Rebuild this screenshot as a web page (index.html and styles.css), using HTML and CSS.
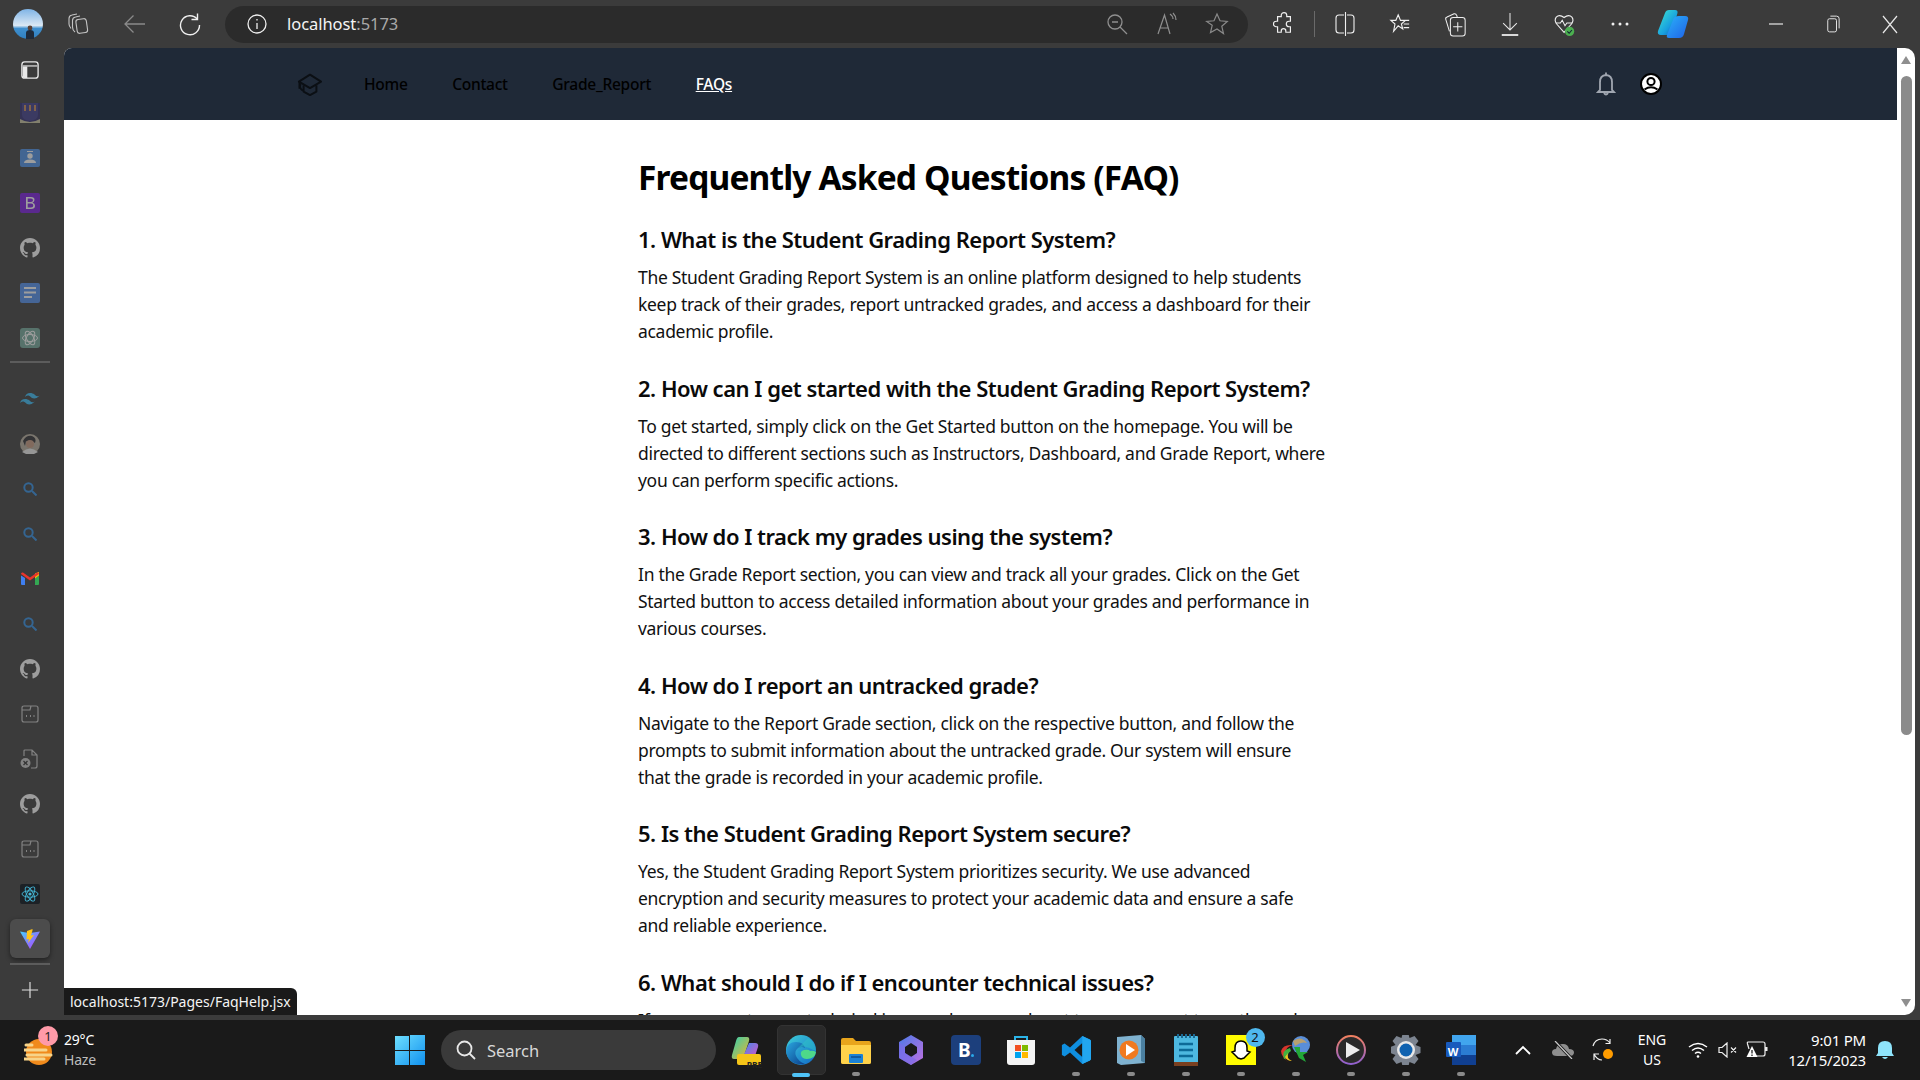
FILE: index.html
```html
<!DOCTYPE html>
<html lang="en">
<head>
<meta charset="utf-8">
<title>FAQ</title>
<link rel="stylesheet" href="styles.css">
</head>
<body>
<div class="screen">
  <header class="chrome">
    <div class="btn w-avatar"><svg width="30" height="30" viewBox="0 0 30 30"><defs><linearGradient id="sky" x1="0" y1="0" x2="0" y2="1"><stop offset="0" stop-color="#7fb4e6"/><stop offset=".55" stop-color="#dbe8f4"/><stop offset=".65" stop-color="#3f8fce"/><stop offset="1" stop-color="#2f7fc0"/></linearGradient></defs><circle cx="15" cy="15" r="15" fill="url(#sky)"/><circle cx="17" cy="19" r="2.4" fill="#5a4034"/><path d="M13 30v-6q0-3 4-3t4 3v6z" fill="#1f2a3a"/></svg></div>
    <div class="btn w-tabs"><svg width="24" height="24" viewBox="0 0 24 24" fill="none" stroke="#c4c4c4" stroke-width="1.100"><rect x="10.500" y="7" width="10.500" height="14" rx="2.500" transform="rotate(-8 15.700 14)"/><path d="M9 20Q6.500 18 6.500 15V8.500Q6.500 5.500 9.500 5L14 4"/><path d="M5 16.500Q3 14 3 12V6.500Q3 3.500 6 3L11 2"/></svg></div>
    <div class="btn w-back"><svg width="24" height="24" viewBox="0 0 24 24" fill="none" stroke="#8a8a8a" stroke-width="1.300"><path d="M22 12H2M10.500 3.500 2 12l8.500 8.500"/></svg></div>
    <div class="btn w-reload"><svg width="24" height="24" viewBox="0 0 24 24" fill="none" stroke="#f0f0f0" stroke-width="1.400"><path d="M19.500 1.500v6h-6"/><path d="M19.300 7.200A9.500 9.500 0 1 0 21.500 13"/></svg></div>
    <div class="address">
      <div class="btn w-addr-l"><svg width="22" height="22" viewBox="0 0 22 22" fill="none" stroke="#efefef" stroke-width="1.300"><circle cx="11" cy="11" r="9"/><path d="M11 10v6M11 6v1.500"/></svg></div>
      <span class="url">localhost<span class="url-port">:5173</span></span>
      <div class="addr-right">
        <div class="btn w-addr"><svg width="24" height="24" viewBox="0 0 24 24" fill="none" stroke="#8f8f8f" stroke-width="1.300"><circle cx="10" cy="10" r="7"/><path d="M15 15l7 7M7 10h6"/></svg></div>
        <div class="btn w-addr"><svg width="24" height="26" viewBox="0 0 24 26" fill="none" stroke="#8f8f8f" stroke-width="1.200"><path d="M3 23 9.500 4 15 23M5 17h8M15 3q3 2 3 5M18 2q3 3 3 7"/></svg></div>
        <div class="btn w-addr"><svg width="24" height="24" viewBox="0 0 24 24" fill="none" stroke="#8a8a8a" stroke-width="1.200"><path d="m12 2 3 6.800 7.300.7-5.500 4.800 1.700 7.200L12 17l-6.500 3.500 1.700-7.200L1.700 9.500 9 8.800z"/></svg></div>
      </div>
    </div>
    <div class="actions">
      <div class="btn w-act"><svg width="22" height="26" viewBox="0 0 24 28" fill="none" stroke="#f0f0f0" stroke-width="1.300"><path d="M9 4.500a3 3 0 0 1 6 0V6h4v5h-1.500a3 3 0 0 0 0 6H19v6h-5v-1.500a2.500 2.500 0 0 0-5 0V23H5v-6H3.500a3 3 0 0 1 0-6H5V6h4z"/></svg></div>
      <span class="sep"></span>
      <div class="btn w-act"><svg width="20" height="28" viewBox="0 0 20 28" fill="none" stroke="#f0f0f0" stroke-width="1.100"><path d="M9 5H4Q1 5 1 8v12q0 3 3 3h5M12 5h4q3 0 3 3v12q0 3-3 3h-4"/><path d="M10.500 2v24"/></svg></div>
      <div class="btn w-act"><svg width="22" height="26" viewBox="0 0 24 26" fill="none" stroke="#f0f0f0" stroke-width="1.200"><path d="M10 3l2.500 6H18l-4.500 4 1.500 5.500L10 15l-5 6 1.500-8L2 9h5.500zM16 9h6M16 13h6M16 17h6"/></svg></div>
      <div class="btn w-act"><svg width="24" height="30" viewBox="0 0 26 30" fill="none" stroke="#f0f0f0" stroke-width="1.100"><rect x="8" y="8" width="16" height="20" rx="3"/><path d="M16 13v10M11 18h10M7 23 3 10q-.6-2 1.400-2.600L12 4q2-.6 3 2l.5 2"/></svg></div>
      <div class="btn w-act"><svg width="22" height="28" viewBox="0 0 24 28" fill="none" stroke="#e8e8e8" stroke-width="1.100"><path d="M12 2v18M4.500 13 12 20.500 19.500 13"/><path d="M3 26h18" stroke-width="2"/></svg></div>
      <div class="btn w-act"><svg width="24" height="30" viewBox="0 0 26 30"><path d="M12 24 4 15Q1 11 3.500 7.500 7 4 12 8q5-4 8.500-.5 2.500 3.500-.5 7.500z" fill="none" stroke="#f0f0f0" stroke-width="1.200"/><path d="M3 14h5l2-3 3 6 2-3h6" fill="none" stroke="#f0f0f0" stroke-width="1.100"/><circle cx="18" cy="23" r="5" fill="#4caf50"/><path d="m15.500 23 2 2 3-3.500" fill="none" stroke="#123" stroke-width="1.100"/></svg></div>
      <div class="btn w-act"><svg width="20" height="6" viewBox="0 0 20 6" fill="#f0f0f0"><circle cx="3" cy="3" r="1.500"/><circle cx="10" cy="3" r="1.500"/><circle cx="17" cy="3" r="1.500"/></svg></div>
      <div class="btn w-act copilot"><svg width="32" height="28" viewBox="0 0 32 28"><defs><linearGradient id="cp1" x1="0" y1="0" x2="1" y2="1"><stop offset="0" stop-color="#3fe8d0"/><stop offset=".6" stop-color="#18a0e0"/><stop offset="1" stop-color="#1450b0"/></linearGradient><linearGradient id="cp2" x1="0" y1="0" x2="1" y2="1"><stop offset="0" stop-color="#2ab0f8"/><stop offset="1" stop-color="#1f62e8"/></linearGradient></defs><path d="M12 0h6q3 0 2.500 3L15 22q-1 3-4 3H4q-4 0-3-4L8 3q1-3 4-3z" fill="url(#cp1)"/><path d="M22 6h6q4 0 3 4l-4 14q-1 4-5 4H12q-3 0-2-3l6-15q1-4 6-4z" fill="url(#cp2)"/></svg></div>
    </div>
    <div class="winctl">
      <div class="btn w-win"><svg width="16" height="16" viewBox="0 0 16 16" stroke="#e8e8e8" stroke-width="1.200"><path d="M1 8h14"/></svg></div>
      <div class="btn w-win"><svg width="14" height="22" viewBox="0 0 16 22" fill="none" stroke="#e8e8e8" stroke-width="1.100"><rect x="2" y="5" width="10" height="15" rx="2"/><path d="M5 2h7q3 0 3 3v11"/></svg></div>
      <div class="btn w-win"><svg width="16" height="22" viewBox="0 0 16 22" stroke="#e8e8e8" stroke-width="1.200"><path d="m1 3 14 17M15 3 1 20"/></svg></div>
    </div>
  </header>

  <div class="middle">
    <aside class="sidebar">
      <div class="side-item first"><svg width="18" height="18" viewBox="0 0 20 20"><rect x="1" y="1" width="18" height="18" rx="3" fill="none" stroke="#e8e8e8" stroke-width="1.500"/><path d="M2 6h5v13H4q-2 0-2-2z" fill="#e8e8e8"/><path d="M2 5.500h16" stroke="#e8e8e8" stroke-width="1.300"/></svg></div>
      <div class="side-item dim"><svg width="20" height="20" viewBox="0 0 20 20"><rect width="20" height="20" fill="#2f2a6e"/><path d="M2 0h16v12q0 5-8 6-8-1-8-6z" fill="#3c3a8a"/><path d="M4 2h2v6H4zM9 2h2v6H9zM14 2h2v6h-2z" fill="#c88a55"/><path d="M0 16q10 6 20 0v4H0z" fill="#c9c5a0"/></svg></div>
      <div class="side-item dim"><svg width="20" height="18" viewBox="0 0 20 18"><rect width="20" height="18" rx="2" fill="#4a90e8"/><circle cx="10" cy="7" r="2.700" fill="#fff"/><path d="M4 14q0-3.500 6-3.500t6 3.500z" fill="#fff"/><path d="M7 2.500h6" stroke="#fff"/></svg></div>
      <div class="side-item dim"><svg width="20" height="20" viewBox="0 0 20 20"><rect width="20" height="20" rx="2" fill="#7a18e0"/><path d="M6 4h5q3.500 0 3.500 2.800 0 2-2 2.900 2.500.6 2.500 3 0 3.300-4 3.300H6zm1.700 1.500v3.600H11q2 0 2-1.800t-2-1.800zm0 5.100v3.900H11q2.300 0 2.300-2t-2.300-1.900z" fill="#fff"/></svg></div>
      <div class="side-item dim"><svg class="gh" width="20" height="20" viewBox="0 0 16 16"><path d="M8 0C3.580 0 0 3.580 0 8c0 3.540 2.290 6.530 5.470 7.590.4.070.55-.17.550-.38 0-.19-.01-.82-.01-1.490-2.010.37-2.530-.49-2.690-.94-.09-.23-.48-.94-.82-1.130-.28-.15-.68-.52-.01-.53.63-.01 1.080.58 1.230.82.720 1.210 1.870.87 2.330.66.070-.52.280-.87.510-1.070-1.780-.2-3.640-.89-3.640-3.950 0-.87.310-1.590.820-2.150-.08-.2-.36-1.020.08-2.120 0 0 .67-.21 2.200.82.640-.18 1.320-.27 2-.27s1.360.09 2 .27c1.530-1.040 2.200-.82 2.200-.82.440 1.100.16 1.920.08 2.120.51.560.82 1.270.82 2.150 0 3.070-1.870 3.750-3.650 3.950.29.250.54.730.54 1.480 0 1.070-.01 1.930-.01 2.200 0 .21.150.46.550.38A8.010 8.010 0 0 0 16 8c0-4.420-3.580-8-8-8z" fill="#fff"/></svg></div>
      <div class="side-item dim"><svg width="20" height="20" viewBox="0 0 20 20"><rect width="20" height="20" rx="2" fill="#4f8ff0"/><path d="M4 5h12M4 9.500h12M4 14h8" stroke="#fff" stroke-width="2"/></svg></div>
      <div class="side-item dim"><svg width="20" height="20" viewBox="0 0 20 20"><rect width="20" height="20" rx="3" fill="#74aa9c"/><g fill="none" stroke="#fff" stroke-width="1"><ellipse cx="10" cy="10" rx="7.500" ry="3.500"/><ellipse cx="10" cy="10" rx="7.500" ry="3.500" transform="rotate(60 10 10)"/><ellipse cx="10" cy="10" rx="7.500" ry="3.500" transform="rotate(120 10 10)"/></g></svg></div>
      <div class="side-rule top"></div>
      <div class="side-item dim"><svg width="20" height="12" viewBox="0 0 20 12"><path d="M10 0Q6 0 5 4q1.500-2 3.500-1.500C10 3 10.500 4 12 5q4 1.500 8-2.500-1.500 1-3.500.5C15 2.500 14 0 10 0zM5 6q-4 0-5 4 1.500-2 3.500-1.500C5 9 5.500 10 7 11q4 1.500 8-2.500-1.500 1-3.500.5C10 8.500 9 6 5 6z" fill="#38bdf8"/></svg></div>
      <div class="side-item dim"><svg width="20" height="20" viewBox="0 0 20 20"><circle cx="10" cy="10" r="10" fill="#b9b0a0"/><path d="M3 7q3-6 9-5 5 2 3 7l-3-2q-5 1-6 0l-1 5z" fill="#2c2c30"/><circle cx="10" cy="10" r="4" fill="#c79a80"/><path d="M2 18q8-7 16 0l-4 2H6z" fill="#f0f0f0"/></svg></div>
      <div class="side-item dim"><svg class="s" width="14" height="14" viewBox="0 0 14 14" fill="none" stroke="#2f8fe8" stroke-width="2"><circle cx="5.500" cy="5.500" r="4.200"/><path d="m9 9 4.500 4.500"/></svg></div>
      <div class="side-item dim"><svg class="s" width="14" height="14" viewBox="0 0 14 14" fill="none" stroke="#2f8fe8" stroke-width="2"><circle cx="5.500" cy="5.500" r="4.200"/><path d="m9 9 4.500 4.500"/></svg></div>
      <div class="side-item"><svg width="18" height="14" viewBox="0 0 18 14"><path d="M0 3.500V12q0 1 1 1h3V6z" fill="#3f7ff0"/><path d="M18 3.500V12q0 1-1 1h-3V6z" fill="#34a853"/><path d="M14 1.500 18 0v3.500L14 6.500z" fill="#fbbc04"/><path d="M0 2q0-2 2-1.500L9 5.500 16 .5Q18 0 18 2L9 8.500z" fill="#e8342c"/></svg></div>
      <div class="side-item dim"><svg class="s" width="14" height="14" viewBox="0 0 14 14" fill="none" stroke="#2f8fe8" stroke-width="2"><circle cx="5.500" cy="5.500" r="4.200"/><path d="m9 9 4.500 4.500"/></svg></div>
      <div class="side-item dim"><svg width="20" height="20" viewBox="0 0 16 16"><path d="M8 0C3.580 0 0 3.580 0 8c0 3.540 2.290 6.530 5.470 7.590.4.070.55-.17.550-.38 0-.19-.01-.82-.01-1.490-2.010.37-2.530-.49-2.690-.94-.09-.23-.48-.94-.82-1.130-.28-.15-.68-.52-.01-.53.63-.01 1.080.58 1.230.82.720 1.210 1.870.87 2.330.66.070-.52.280-.87.510-1.070-1.780-.2-3.640-.89-3.640-3.950 0-.87.310-1.590.820-2.150-.08-.2-.36-1.020.08-2.120 0 0 .67-.21 2.200.82.640-.18 1.320-.27 2-.27s1.360.09 2 .27c1.530-1.040 2.200-.82 2.200-.82.440 1.100.16 1.920.08 2.120.51.560.82 1.270.82 2.150 0 3.070-1.870 3.750-3.650 3.950.29.250.54.730.54 1.480 0 1.070-.01 1.930-.01 2.200 0 .21.150.46.550.38A8.010 8.010 0 0 0 16 8c0-4.420-3.580-8-8-8z" fill="#fff"/></svg></div>
      <div class="side-item dim"><svg width="18" height="18" viewBox="0 0 18 18" fill="none" stroke="#c8c8c8" stroke-width="1.200"><path d="M1 3q0-2 2-2h12q2 0 2 2v12q0 2-2 2H3q-2 0-2-2zM1 5h8l1-4"/><path d="M5 11h1M9 11h1M12.500 11h1" stroke-width="1.800"/></svg></div>
      <div class="side-item dim"><svg width="20" height="20" viewBox="0 0 20 20" fill="none" stroke="#c8c8c8" stroke-width="1.200"><path d="M4 7V2q0-1 1-1h7l5 5v11q0 2-2 2h-4M12 1v5h5"/><circle cx="5.500" cy="14" r="5" fill="#c8c8c8" stroke="none"/><path d="m3.500 12 4 4m0-4-4 4" stroke="#333" stroke-width="1.300"/></svg></div>
      <div class="side-item dim"><svg width="20" height="20" viewBox="0 0 16 16"><path d="M8 0C3.580 0 0 3.580 0 8c0 3.540 2.290 6.530 5.470 7.590.4.070.55-.17.550-.38 0-.19-.01-.82-.01-1.490-2.010.37-2.530-.49-2.690-.94-.09-.23-.48-.94-.82-1.130-.28-.15-.68-.52-.01-.53.63-.01 1.080.58 1.230.82.720 1.210 1.870.87 2.330.66.070-.52.280-.87.510-1.070-1.780-.2-3.640-.89-3.640-3.950 0-.87.310-1.590.820-2.150-.08-.2-.36-1.020.08-2.120 0 0 .67-.21 2.200.82.640-.18 1.320-.27 2-.27s1.360.09 2 .27c1.530-1.040 2.200-.82 2.200-.82.440 1.100.16 1.920.08 2.120.51.560.82 1.270.82 2.150 0 3.070-1.870 3.750-3.650 3.950.29.250.54.730.54 1.480 0 1.070-.01 1.930-.01 2.200 0 .21.150.46.550.38A8.010 8.010 0 0 0 16 8c0-4.420-3.580-8-8-8z" fill="#fff"/></svg></div>
      <div class="side-item dim"><svg width="18" height="18" viewBox="0 0 18 18" fill="none" stroke="#c8c8c8" stroke-width="1.200"><path d="M1 3q0-2 2-2h12q2 0 2 2v12q0 2-2 2H3q-2 0-2-2zM1 5h8l1-4"/><path d="M5 11h1M9 11h1M12.500 11h1" stroke-width="1.800"/></svg></div>
      <div class="side-item"><svg width="20" height="20" viewBox="0 0 20 20"><rect width="20" height="20" rx="2" fill="#1c2126"/><g fill="none" stroke="#45b8d8" stroke-width=".9"><ellipse cx="10" cy="10" rx="8" ry="3.200"/><ellipse cx="10" cy="10" rx="8" ry="3.200" transform="rotate(60 10 10)"/><ellipse cx="10" cy="10" rx="8" ry="3.200" transform="rotate(120 10 10)"/></g><circle cx="10" cy="10" r="1.600" fill="#45b8d8"/></svg></div>
      <div class="side-item"><div class="side-active"><svg width="20" height="20" viewBox="0 0 20 20"><defs><linearGradient id="vt" x1="0" y1="0" x2="1" y2="1"><stop offset="0" stop-color="#41d1ff"/><stop offset="1" stop-color="#bd34fe"/></linearGradient></defs><path d="M0 2.500 9 4l1 0 10-1.500L10 20z" fill="url(#vt)"/><path d="M12.500 0 7 2 6.500 10.500 9 10l-1 4 6-8-3 .5 1.500-5z" fill="#ffc517"/></svg></div></div>
      <div class="side-rule bottom"></div>
      <div class="side-item"><svg width="18" height="18" viewBox="0 0 20 20" stroke="#e0e0e0" stroke-width="1.300"><path d="M10 1v18M1 10h18"/></svg></div>
    </aside>

    <main class="page">
      <nav class="nav">
        <svg class="nav-logo" width="28" height="28" viewBox="0 0 24 24" fill="none" stroke="#0b0f14" stroke-width="1.700" stroke-linejoin="round"><path d="M12 4 2.500 10l9.500 5.500 9.500-5.500z"/><path d="M6.500 13v5.500l5.500 3 5.500-3V13"/><path d="M3 10v6"/><path d="M4 12q-1.500 3 1 5l1 .5"/></svg>
        <a class="nav-link">Home</a>
        <a class="nav-link">Contact</a>
        <a class="nav-link">Grade_Report</a>
        <a class="nav-link current">FAQs</a>
        <div class="nav-right">
          <svg width="24" height="26" viewBox="0 0 24 26" fill="none" stroke="#a0a6b0" stroke-width="1.800"><path d="M6 19v-8q0-6.500 6-7 6 .5 6 7v8l2 2H4z"/><path d="M10 22q2 3 4 0M12 1.500v2.500"/></svg>
          <svg width="22" height="22" viewBox="0 0 22 22"><circle cx="11" cy="11" r="10" fill="#fff" stroke="#000" stroke-width="2"/><circle cx="11" cy="8.500" r="3.600" fill="#fff" stroke="#000" stroke-width="2"/><path d="M4.500 16.500q6.500-4.500 13 0" fill="none" stroke="#000" stroke-width="2"/></svg>
        </div>
      </nav>
      <div class="content">
        <h1>Frequently Asked Questions (FAQ)</h1>
        <section class="faq">
          <h2>1. What is the Student Grading Report System?</h2>
          <p>The Student Grading Report System is an online platform designed to help students keep track of their grades, report untracked grades, and access a dashboard for their academic profile.</p>
        </section>
        <section class="faq">
          <h2>2. How can I get started with the Student Grading Report System?</h2>
          <p>To get started, simply click on the Get Started button on the homepage. You will be directed to different sections such as Instructors, Dashboard, and Grade Report, where you can perform specific actions.</p>
        </section>
        <section class="faq">
          <h2>3. How do I track my grades using the system?</h2>
          <p>In the Grade Report section, you can view and track all your grades. Click on the Get Started button to access detailed information about your grades and performance in various courses.</p>
        </section>
        <section class="faq">
          <h2>4. How do I report an untracked grade?</h2>
          <p>Navigate to the Report Grade section, click on the respective button, and follow the prompts to submit information about the untracked grade. Our system will ensure that the grade is recorded in your academic profile.</p>
        </section>
        <section class="faq">
          <h2>5. Is the Student Grading Report System secure?</h2>
          <p>Yes, the Student Grading Report System prioritizes security. We use advanced encryption and security measures to protect your academic data and ensure a safe and reliable experience.</p>
        </section>
        <section class="faq">
          <h2>6. What should I do if I encounter technical issues?</h2>
          <p>If you encounter any technical issues, please reach out to our support team through the help section of the platform.</p>
        </section>
      </div>
    </main>

    <div class="scrollbar">
      <span class="arrow up"></span>
      <span class="thumb"></span>
      <span class="arrow down"></span>
    </div>
    <div class="link-tip">localhost:5173/Pages/FaqHelp.jsx</div>
  </div>

  <footer class="taskbar">
    <div class="weather">
      <div class="weather-icon">
        <svg width="32" height="34" viewBox="0 0 32 34"><circle cx="15" cy="19" r="13" fill="#f08a1c"/><path d="M2 12h6M0 17h22M3 22h24M0 26h20" stroke="#f7d48a" stroke-width="3" stroke-linecap="round"/></svg>
        <span class="badge-pink">1</span>
      </div>
      <div class="weather-text"><span>29°C</span><span class="muted">Haze</span></div>
    </div>
    <svg class="winlogo" width="30" height="30" viewBox="0 0 30 30"><defs><linearGradient id="win" x1="0" y1="0" x2="1" y2="1"><stop offset="0" stop-color="#6fe0ff"/><stop offset="1" stop-color="#1090ee"/></linearGradient></defs><path d="M0 1h14v14H0zM15 0h15v15H15zM0 16h14v14H0zM15 16h15v14H15z" fill="url(#win)"/></svg>
    <div class="search">
      <svg width="22" height="22" viewBox="0 0 22 22" fill="none" stroke="#e8e8e8" stroke-width="1.800"><circle cx="9.500" cy="9.500" r="7"/><path d="m14.500 14.500 5.500 5.500"/></svg>
      <span>Search</span>
    </div>
    <div class="apps">
      <div class="app"><svg width="30" height="32" viewBox="0 0 30 32"><defs><linearGradient id="c1" x1="0" y1="0" x2="1" y2="1"><stop offset="0" stop-color="#2fd0b0"/><stop offset="1" stop-color="#f2b42a"/></linearGradient><linearGradient id="c2" x1="0" y1="0" x2="1" y2="1"><stop offset="0" stop-color="#3a8cf0"/><stop offset="1" stop-color="#e050c0"/></linearGradient></defs><path d="M8 3h8q3 0 2 4L13 22q-1 3-4 3H3q-3 0-2-4L5 7q1-4 3-4z" fill="url(#c1)"/><path d="M18 9h6q4 0 3 4l-3 9q-1 3-4 3h-9z" fill="url(#c2)"/><rect x="6" y="20" width="24" height="11" rx="2" fill="#f5c518"/></svg><span class="pre">PRE</span></div>
      <div class="app active"><svg width="32" height="32" viewBox="0 0 32 32"><defs><linearGradient id="e1" x1="0" y1="0" x2="1" y2="1"><stop offset="0" stop-color="#3fd0d8"/><stop offset="1" stop-color="#1068c8"/></linearGradient><linearGradient id="e2" x1="0" y1="0" x2="1" y2="1"><stop offset="0" stop-color="#2aa8e0"/><stop offset="1" stop-color="#0b3f8c"/></linearGradient></defs><circle cx="16" cy="16" r="15" fill="url(#e1)"/><path d="M1 17q1-9 10-9 8 0 9 6-3-2-7 0-4 3-2 8t9 8Q3 32 1 17z" fill="url(#e2)"/><path d="M31 18q-1 7-9 7-5 0-6-4t3-5q5-1 6 1 3-1 6 1z" fill="#4ed88a"/><path d="M13 14q5-3 11 0 4 2 7 3-.5-9-8-13" fill="#2ec4c4" opacity=".5"/></svg><span class="strip"></span></div>
      <div class="app"><svg width="30" height="28" viewBox="0 0 30 28"><path d="M0 4q0-2 2-2h10l3 3h13q2 0 2 2v19q0 2-2 2H2q-2 0-2-2z" fill="#e8a51c"/><path d="M0 9h30v17q0 2-2 2H2q-2 0-2-2z" fill="#ffd24a"/><rect x="8" y="18" width="14" height="9" rx="1" fill="#1b82d6"/><path d="M10 21h10" stroke="#0c4e90" stroke-width="1.500"/></svg><span class="dot"></span></div>
      <div class="app"><svg width="26" height="30" viewBox="0 0 26 30"><defs><linearGradient id="b1" x1="0" y1="0" x2="1" y2="1"><stop offset="0" stop-color="#4a7ae8"/><stop offset="1" stop-color="#c070e0"/></linearGradient></defs><path d="M13 0 25 7v16l-12 7L1 23V7z" fill="url(#b1)"/><path d="M13 8l6 4v6l-6 4-6-4v-6z" fill="#1a1a1a"/><path d="M7 12 1 7v16l12 7 6-5-12-7z" fill="#7a6ae8" opacity=".6"/></svg></div>
      <div class="app"><div class="booking">B</div></div>
      <div class="app"><svg width="30" height="32" viewBox="0 0 30 32"><path d="M9 8V3h12v5" fill="none" stroke="#2bb4e8" stroke-width="2"/><path d="M1 6h28v22q0 3-3 3H4q-3 0-3-3z" fill="#f4f4f4"/><rect x="9" y="11" width="6" height="6" fill="#f25022"/><rect x="16" y="11" width="6" height="6" fill="#7fba00"/><rect x="9" y="18" width="6" height="6" fill="#00a4ef"/><rect x="16" y="18" width="6" height="6" fill="#ffb900"/></svg></div>
      <div class="app"><svg width="30" height="30" viewBox="0 0 100 100"><path d="M71 3 96 15q4 2 4 6v58q0 4-4 6L71 97 30 58 12 72 3 67V33l9-5 18 14z" fill="#0f8fe0"/><path d="M71 27 45 50l26 23z" fill="#1a1a1a"/><path d="M71 3 96 15q4 2 4 6v58q0 4-4 6L71 97z" fill="#22a6f0"/></svg><span class="dot"></span></div>
      <div class="app"><svg width="28" height="30" viewBox="0 0 28 30"><path d="M0 2 24 0l4 4v24L4 30l-4-2z" fill="#7fb2d0"/><path d="M24 0l4 4v24l-4-2z" fill="#4a7fa0"/><circle cx="12" cy="15" r="9.500" fill="#f07a20"/><path d="M9 9v12l9-6z" fill="#fff"/></svg><span class="dot"></span></div>
      <div class="app"><svg width="24" height="32" viewBox="0 0 24 32"><rect y="2" width="24" height="30" rx="1" fill="#4db8e0"/><rect y="28" width="24" height="4" fill="#7a4020"/><path d="M4 0v4M8 0v4M12 0v4M16 0v4M20 0v4" stroke="#1a6a94" stroke-width="2"/><path d="M5 10h14M5 16h14M5 22h14" stroke="#0d6a98" stroke-width="2.500"/></svg><span class="dot"></span></div>
      <div class="app"><svg class="snap" width="30" height="30" viewBox="0 0 30 30"><rect width="30" height="30" fill="#fffc00"/><path d="M15 6q6 0 6 7v3l3 1-2 2-2 2-2 2-3 1-3-1-2-2-2-2-2-2 3-1v-3q0-7 6-7z" fill="#fff" stroke="#000" stroke-width="1.500"/></svg><span class="badge-blue">2</span><span class="dot"></span></div>
      <div class="app"><svg width="30" height="30" viewBox="0 0 30 30"><circle cx="20" cy="10" r="9" fill="#5a8ed8"/><path d="M12 6q8-6 14 2-6-2-12 3z" fill="#b8a070"/><path d="M12 10A10 10 0 0 0 8 28q-8-7-8-12Q2 9 12 10z" fill="#d8362c"/><path d="M3 24q-3-9 6-11l1 3q-4 2-3 7z" fill="#40b040"/><path d="M7 18q-2 5 4 8-5 0-7-4z" fill="#f4c020"/><path d="M13 12h6v5h8l-5 3 3 7-7-4z" fill="#22a838"/></svg><span class="dot"></span></div>
      <div class="app"><svg width="30" height="30" viewBox="0 0 30 30"><defs><linearGradient id="pl" x1="0" y1="0" x2="0" y2="1"><stop offset="0" stop-color="#f08060"/><stop offset="1" stop-color="#9060d0"/></linearGradient></defs><circle cx="15" cy="15" r="14" fill="#2a2a2a" stroke="url(#pl)" stroke-width="2"/><path d="M10 7v16l14-8z" fill="#eee"/></svg><span class="dot"></span></div>
      <div class="app"><svg width="30" height="30" viewBox="0 0 30 30"><path d="M12 0h6l1 4 5-2 4 5-3 4 5 2v6l-5 2 3 4-4 5-5-2-1 4h-6l-1-4-5 2-4-5 3-4-5-2v-6l5-2-3-4 4-5 5 2z" transform="translate(-.5 -1)" fill="#7c8490"/><circle cx="15" cy="15" r="9" fill="#e8e8e8"/><circle cx="15" cy="15" r="6.500" fill="#0f62b0"/></svg><span class="dot"></span></div>
      <div class="app"><svg width="30" height="30" viewBox="0 0 30 30"><path d="M6 0h24v30H6z" fill="#2b6cc8"/><path d="M6 0h24v10H6z" fill="#41a5ee"/><path d="M6 10h24v10H6z" fill="#2b7cd3"/><path d="M6 20h24v10H6z" fill="#103f91"/><rect y="7" width="15" height="15" rx="1" fill="#185abd"/></svg><span class="word">W</span><span class="dot"></span></div>
    </div>
    <div class="tray">
      <div class="cell c40"><svg width="16" height="10" viewBox="0 0 16 10" fill="none" stroke="#fff" stroke-width="1.800"><path d="m1 9 7-7 7 7"/></svg></div>
      <div class="cell c40"><svg width="22" height="18" viewBox="0 0 22 18"><path d="M5 15q-5 0-5-3.500T4 8q1-5 7-5 5 0 6 5 5 0 5 3.500T17 15z" fill="#8e8e8e"/><path d="m3 0 17 18" stroke="#1a1a1a" stroke-width="3"/><path d="m3 0 17 18" stroke="#ccc" stroke-width="1.200"/></svg></div>
      <div class="cell c40"><svg width="22" height="24" viewBox="0 0 22 24" fill="none" stroke="#eee" stroke-width="1.200"><path d="M1 8q2-7 9-7 5 0 8 4M18 1v4.500h-4.500M2 16q3 6 8 6M2 22v-6h5"/><circle cx="16" cy="16" r="5" fill="#ff9c00" stroke="none"/></svg></div>
      <div class="cell c-lang"><span>ENG</span><span>US</span></div>
      <div class="cell c-wifi"><svg width="20" height="16" viewBox="0 0 20 16" fill="none" stroke="#fff" stroke-width="1.500"><path d="M1 5q9-7 18 0M4 8.500q6-5 12 0M7 11.500q3-2.500 6 0"/><circle cx="10" cy="14.500" r="1.300" fill="#fff" stroke="none"/></svg></div>
      <div class="cell c-mute"><svg width="20" height="16" viewBox="0 0 20 16" fill="none" stroke="#eee" stroke-width="1.200"><path d="M1 5.500h3L9 1v14l-5-4.500H1zM13 5.500l5 5m0-5-5 5"/></svg></div>
      <div class="cell c-bat"><svg width="22" height="18" viewBox="0 0 22 18" fill="none" stroke="#eee" stroke-width="1.200"><path d="M2 1h15q2 0 2 2v10q0 2-2 2H9"/><path d="M2 1q-1 0-.5 2l1.500 5"/><rect x="19" y="6" width="2.500" height="4" fill="#eee" stroke="none"/><path d="M6 5 .5 16h11z" fill="#fff" stroke="none"/><path d="M6 9v3.500M6 13.500V15" stroke="#111"/></svg></div>
      <div class="cell c-time"><span>9:01 PM</span><span>12/15/2023</span></div>
      <div class="cell c-bell"><svg width="18" height="20" viewBox="0 0 18 20" fill="#8ee4fb"><path d="M2 13V8q0-7 7-7t7 7v5l2 3H0z"/><path d="M6 17q3 4 6 0z"/></svg></div>
    </div>
  </footer>
</div>
</body>
</html>
```
FILE: styles.css
```css
* { box-sizing: border-box; }
html, body { margin: 0; height: 100%; overflow: hidden; }
body { font-family: "Noto Sans", "Open Sans", sans-serif; background: #3b3b3b; color: #fff; }
.screen { width: 1920px; height: 1080px; display: flex; flex-direction: column; }
.btn { display: flex; align-items: center; justify-content: center; height: 100%; flex: none; }

/* Browser chrome */
.chrome { height: 48px; flex: none; display: flex; align-items: center; background: #3b3b3b; }
.w-avatar { width: 56px; }
.w-tabs { width: 44px; }
.w-back { width: 70px; }
.w-reload { width: 40px; }
.address { margin-left: 15px; width: 1023px; height: 37px; border-radius: 18.5px; background: #2b2b2b; display: flex; align-items: center; padding-left: 16px; padding-right: 6px; }
.w-addr-l { width: 32px; }
.url { margin-left: 14px; padding-bottom: 2px; font-size: 16.5px; letter-spacing: -.05px; color: #f4f4f4; }
.url-port { color: #a8a8a8; }
.addr-right { margin-left: auto; display: flex; height: 100%; }
.w-addr { width: 50px; }
.actions { margin-left: 8.5px; display: flex; align-items: center; height: 100%; }
.w-act { width: 55px; }
.copilot { margin-left: -2px; }
.sep { width: 1px; height: 26px; margin: 0 2.5px; background: #6a6a6a; flex: none; }
.winctl { margin-left: auto; margin-right: 1.5px; display: flex; height: 100%; }
.w-win { width: 57px; }

/* Middle */
.middle { height: 968px; flex: none; display: flex; position: relative; }
.sidebar { width: 64px; flex: none; display: flex; flex-direction: column; align-items: center; padding-right: 4px; }
.side-item { height: 45px; width: 100%; display: flex; align-items: center; justify-content: center; flex: none; }
.side-item.first { height: 42px; padding-top: 2px; }
.dim { opacity: .5; }
.side-rule { width: 40px; flex: none; position: relative; }
.side-rule::before { content: ""; position: absolute; left: 0; right: 0; height: 2px; background: #5c5c5c; }
.side-rule.top { height: 16px; }
.side-rule.top::before { top: 1px; }
.side-rule.bottom { height: 6px; }
.side-rule.bottom::before { top: 2px; }
.side-active { width: 40px; height: 39px; border-radius: 6px; background: #4c4c4c; box-shadow: 0 2px 5px rgba(0,0,0,.45); display: flex; align-items: center; justify-content: center; }

.page { width: 1833px; flex: none; height: 967px; background: #fff; border-radius: 8px 0 0 0; color: #0a0a0a; overflow: hidden; }
.nav { height: 72px; background: #1f2937; display: flex; align-items: center; padding-left: 232px; }
.nav-logo { margin-right: 40px; flex: none; }
.nav-link { margin-right: 44.5px; font-size: 15.5px; font-weight: 500; letter-spacing: -.25px; color: #000; }
.nav-link.current { color: #fff; text-decoration: underline; margin-right: 0; }
.nav-right { margin-left: auto; margin-right: 235px; display: flex; align-items: center; gap: 22px; }
.content { width: 688px; margin-left: 574px; padding-top: 33px; }
h1 { margin: 0 0 22px; font-size: 33.5px; line-height: 48px; font-weight: 700; letter-spacing: -.85px; color: #000; }
.faq { margin-bottom: 26.5px; }
h2 { margin: 0; font-size: 22px; line-height: 32px; font-weight: 600; letter-spacing: -.5px; color: #0a0a0a; white-space: nowrap; }
p { margin: 9px 0 0; font-size: 17.5px; line-height: 27px; letter-spacing: -.3px; color: #111; }

/* Scrollbar */
.scrollbar { position: relative; width: 23px; height: 967px; flex: none; background: #fff; display: flex; flex-direction: column; align-items: center; clip-path: inset(0 5px 0 0 round 0 10px 10px 0); padding-right: 5px; padding-top: 8px; padding-bottom: 8px; }
.arrow { width: 0; height: 0; border-left: 5.500px solid transparent; border-right: 5.500px solid transparent; flex: none; }
.arrow.up { border-bottom: 8px solid #8f8f8f; }
.arrow.down { border-top: 8px solid #8f8f8f; margin-top: auto; }
.thumb { width: 11px; height: 659px; margin-top: 12px; border-radius: 6px; background: #8b8b8b; flex: none; }
.link-tip { position: absolute; left: 64px; top: 940px; width: 233px; height: 27px; background: #1a1a1a; border-radius: 0 6px 0 0; color: #f4f4f4; font-size: 14px; line-height: 27px; padding-left: 6px; }

/* Taskbar */
.taskbar { margin-top: 4px; height: 60px; flex: none; background: #1a1a1a; display: flex; align-items: center; padding-left: 24px; }
.weather { width: 371px; display: flex; align-items: center; flex: none; }
.weather-icon { position: relative; width: 32px; height: 34px; margin-right: 8px; }
.badge-pink { position: absolute; left: 14px; top: -7px; width: 20px; height: 20px; border-radius: 50%; background: #ff9aa8; color: #222; font-size: 13px; line-height: 20px; text-align: center; }
.weather-text { display: flex; flex-direction: column; font-size: 14px; line-height: 20px; letter-spacing: -.2px; }
.muted { color: #bdbdbd; }
.winlogo { flex: none; }
.search { margin-left: 16px; width: 275px; height: 40px; border-radius: 20px; background: #3a3a3a; display: flex; align-items: center; gap: 10px; padding-left: 14px; font-size: 16.5px; color: #d8d8d8; flex: none; }
.apps { margin-left: 2.5px; display: flex; flex: none; height: 100%; }
.app { position: relative; width: 55px; height: 100%; display: flex; align-items: center; justify-content: center; flex: none; }
.app.active::before { content: ""; position: absolute; left: 3px; right: 3px; top: 5px; bottom: 5px; border-radius: 5px; background: #2a2a2a; border: 1px solid #333; }
.app > svg, .app > .booking { position: relative; }
.dot { position: absolute; left: 50%; bottom: 4px; width: 8px; height: 4px; margin-left: -4px; border-radius: 2px; background: #8a8a8a; }
.strip { position: absolute; left: 50%; bottom: 3px; width: 18px; height: 4px; margin-left: -9px; border-radius: 2px; background: #4fc3f7; }
.booking { width: 30px; height: 30px; border-radius: 4px; background: #1c3f7c; color: #fff; font-weight: 700; font-size: 19px; line-height: 30px; padding-left: 7px; }
.booking::after { content: ""; position: absolute; left: 20px; top: 19px; width: 3px; height: 3px; border-radius: 50%; background: #2aa8e8; }
.pre { position: absolute; left: 24px; top: 39px; width: 24px; text-align: center; font-size: 8.5px; line-height: 11px; font-weight: 700; color: #222; }
.word { position: absolute; left: 12px; top: 24px; width: 15px; text-align: center; font-size: 11px; line-height: 15px; font-weight: 700; color: #fff; }
.badge-blue { position: absolute; left: 32px; top: 8px; width: 19px; height: 19px; border-radius: 50%; background: #4fb8ee; color: #111; font-size: 13px; line-height: 19px; text-align: center; }
.tray { margin-left: 14.5px; display: flex; height: 100%; flex: none; }
.cell { height: 100%; display: flex; align-items: center; justify-content: center; flex: none; }
.c40 { width: 40px; }
.c-lang { width: 58px; flex-direction: column; font-size: 14px; line-height: 20px; }
.c-wifi { width: 34px; }
.c-mute { width: 25px; }
.c-bat { width: 34px; }
.c-time { width: 92px; flex-direction: column; align-items: flex-end; font-size: 15px; line-height: 20px; letter-spacing: -.2px; white-space: nowrap; }
.c-bell { width: 38px; }
```
